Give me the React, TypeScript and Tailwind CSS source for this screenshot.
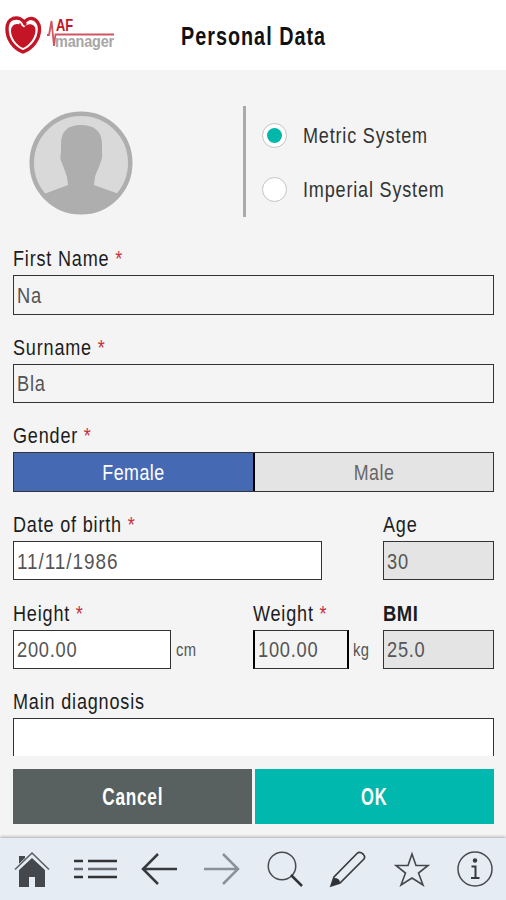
import { useState } from "react";
import type { ReactNode } from "react";
import clsx from "clsx";

const Label = ({ text, required, bold }: { text: string; required?: boolean; bold?: boolean }) => (
  <div
    className={clsx(
      "h-[30px] w-max origin-left whitespace-nowrap text-[22px] leading-[27px] text-[#1c1c1c]",
      bold ? "scale-x-[0.84] font-bold tracking-[0.6px]" : "scale-x-[0.82] tracking-[1px]"
    )}
  >
    {text}
    {required && <span className="ml-[7px] text-[#c8313f]">*</span>}
  </div>
);

const Field = ({
  label,
  value,
  required,
  bold,
  className,
  inputClassName,
}: {
  label: string;
  value: string;
  required?: boolean;
  bold?: boolean;
  className?: string;
  inputClassName?: string;
}) => (
  <div className={className}>
    <Label text={label} required={required} bold={bold} />
    <div className={clsx("h-[39.5px] border border-[#333] pl-[3px]", inputClassName)}>
      <input
        aria-label={label}
        defaultValue={value}
        className={clsx(
          "block h-full w-[116%] origin-left bg-transparent pt-[2px] text-[22px] text-[#555] outline-none",
          value.includes("/") ? "scale-x-[0.86] tracking-[1.1px]" : "scale-x-[0.83] tracking-[0.9px]"
        )}
      />
    </div>
  </div>
);

const Radio = ({ label, checked, onChange }: { label: string; checked: boolean; onChange: () => void }) => (
  <button onClick={onChange} className="flex items-center gap-4">
    <span className="flex size-[25px] items-center justify-center rounded-full border border-[#c4c4c4] bg-white">
      {checked && <span className="size-[15px] rounded-full bg-[#00b8a9]" />}
    </span>
    <span className="origin-left scale-x-[0.82] text-[22px] leading-[27px] tracking-[1px] text-[#333]">{label}</span>
  </button>
);

const Row = ({ children }: { children: ReactNode }) => <div className="flex h-[88.65px] shrink-0">{children}</div>;

const Logo = () => (
  <div className="flex h-[70px] w-[120px] shrink-0 items-start pl-[4px] pt-[15px]">
    <svg width="39" height="41" viewBox="0 0 39 41" fill="none">
      <path
        d="M21 9C19 4 14 2 9 3.500C4.500 5 3 9 3 14C3 24 9 33 19 37C29 33 35.500 24 35.500 14C35.500 8 32 4 28 3.500C25 3 23.500 4 22 5.500"
        stroke="#c31525"
        strokeWidth="3.400"
        strokeLinecap="round"
      />
      <path
        d="M19 33C12 30 7 22 7 16C7 11 11 8 15 9.500L16 7.500L17.500 10.500L20 12.500C24 7 31.500 9 31.500 15C31.500 22 26 30 19 33Z"
        fill="#c31525"
      />
    </svg>
    <div className="relative ml-[4px] h-[41px] w-[70px]">
      <svg width="70" height="34" viewBox="0 0 70 34" fill="none" className="absolute left-0 top-0">
        <path d="M0 20H2L4.500 6L7 31L8.500 19.500H67" stroke="#cf5560" strokeWidth="1.800" />
      </svg>
      <span className="absolute left-[9px] top-[3px] origin-left scale-x-[0.76] text-[17px] font-bold leading-[15px] text-[#c31525]">
        AF
      </span>
      <span className="absolute left-[8px] top-[19px] origin-left scale-x-[0.85] text-[17px] font-bold leading-[15px] tracking-[-0.2px] text-[#a6a6a6]">
        manager
      </span>
    </div>
  </div>
);

const Avatar = () => (
  <svg width="104" height="104" viewBox="0 0 104 104">
    <defs>
      <clipPath id="avatar-clip">
        <circle cx="52" cy="52" r="50" />
      </clipPath>
    </defs>
    <circle cx="52" cy="52" r="49.500" fill="#d9d9d9" />
    <path
      clipPath="url(#avatar-clip)"
      fill="#aeaeae"
      d="M32 33C32 20 39 14 52 14C65 14 73 20 73 33V42C74 46 72 50 71 53C69 59 67 62 66 66L65 74L90 83L104 92V104H0V92L15 83L39 74L38 66C36 60 35 57 33 52C31 49 31 45 32 42Z"
    />
    <circle cx="52" cy="52" r="49.250" fill="none" stroke="#aeaeae" strokeWidth="4.500" />
  </svg>
);

const icons = [
  {
    label: "Home",
    path: (
      <>
        <path d="M5 18L18 6L31 18V35H21V25H15V35H5Z" fill="#44474b" />
        <path d="M5 4H11V9L5 14Z" fill="#44474b" />
        <path d="M1 18.500L18 2L35 18.500" stroke="#e6ecf4" strokeWidth="4" />
        <path d="M1 17.500L18 1L35 17.500" stroke="#5c5f63" strokeWidth="1.600" />
      </>
    ),
  },
  {
    label: "List",
    path: (
      <g stroke="#303236" strokeWidth="2.500">
        <path d="M-3 9H6M11 9H40M-3 25H6M11 25H40" />
        <path d="M-3 17H6M11 17H40" stroke="#686c72" />
      </g>
    ),
  },
  { label: "Back", path: <path d="M36 17H2M17 2L2 17L17 32" stroke="#36393d" strokeWidth="2.500" /> },
  { label: "Forward", path: <path d="M0 17H34M19 2L34 17L19 32" stroke="#8b919b" strokeWidth="2.500" /> },
  {
    label: "Search",
    path: (
      <>
        <circle cx="15" cy="14" r="13.750" stroke="#484c51" strokeWidth="1.500" />
        <path d="M24 23L35 34" stroke="#303236" strokeWidth="2.500" />
      </>
    ),
  },
  {
    label: "Edit",
    path: (
      <>
        <path d="M1 34L4 25L27 1.500Q29.500 -1 33 2Q36 5 33.500 7.500L10 31Z" stroke="#393c40" strokeWidth="1.700" />
        <path d="M1 34L4 26Q10 26 10 31Z" fill="#303236" />
      </>
    ),
  },
  {
    label: "Favourites",
    path: (
      <path
        d="M18 2L22 13.500H34L24.500 21L29 33L18 26L7 33L11.500 21L2 13.500H14Z"
        stroke="#44484d"
        strokeWidth="1.600"
      />
    ),
  },
  {
    label: "Info",
    path: (
      <>
        <circle cx="18" cy="17" r="17" stroke="#484c51" strokeWidth="1.500" />
        <circle cx="18" cy="8.500" r="2.200" fill="#36393d" />
        <path d="M14.500 14.500H18.500V26M14 26H22.500" stroke="#36393d" strokeWidth="2" />
      </>
    ),
  },
];

const App = () => {
  const [metric, setMetric] = useState(true);
  const [gender, setGender] = useState("Female");

  return (
    <div className="flex h-[900px] w-[506px] flex-col overflow-hidden bg-[#f4f4f4] font-['Liberation_Sans',sans-serif]">
      <header className="flex h-[70px] shrink-0 bg-white">
        <Logo />
        <h1 className="ml-[61px] mt-[21px] origin-left scale-x-[0.79] whitespace-nowrap text-[25px] font-bold leading-[30px] tracking-[1.3px] text-[#111]">
          Personal Data
        </h1>
      </header>

      <main className="flex h-[686px] shrink-0 flex-col overflow-hidden pl-[13px] pr-[12px]">
        <div className="flex h-[175px] shrink-0">
          <div className="w-[230px] pl-4 pt-[41px]">
            <Avatar />
          </div>
          <div className="mt-[36px] flex h-[111px] flex-col gap-[27px] border-l-[3px] border-[#aaa] pl-4 pt-[16px]">
            <Radio label="Metric System" checked={metric} onChange={() => setMetric(true)} />
            <Radio label="Imperial System" checked={!metric} onChange={() => setMetric(false)} />
          </div>
        </div>

        <Row>
          <Field label="First Name" value="Na" required className="w-full" />
        </Row>
        <Row>
          <Field label="Surname" value="Bla" required className="w-full" />
        </Row>
        <Row>
          <div className="w-full">
            <Label text="Gender" required />
            <div className="flex h-[39.5px] border border-[#333]">
              {["Female", "Male"].map((option, i) => (
                <button
                  key={option}
                  onClick={() => setGender(option)}
                  className={clsx(
                    "text-[22px] tracking-[0.6px]",
                    i === 0 ? "w-[241px] border-r-2 border-black" : "flex-1",
                    gender === option ? "bg-[#456ab3] text-white" : "bg-[#e4e4e4] text-[#666]"
                  )}
                >
                  <span className="inline-block scale-x-[0.81]">{option}</span>
                </button>
              ))}
            </div>
          </div>
        </Row>
        <Row>
          <Field label="Date of birth" value="11/11/1986" required className="w-[309px]" inputClassName="bg-white" />
          <Field label="Age" value="30" className="ml-auto w-[111px]" inputClassName="bg-[#e4e4e4]" />
        </Row>
        <Row>
          <Field label="Height" value="200.00" required className="w-[158px]" inputClassName="bg-white" />
          <span className="ml-[5px] mt-[37px] w-[77px] origin-left scale-x-[0.82] text-[18px] tracking-[0.4px] text-[#555]">
            cm
          </span>
          <Field label="Weight" value="100.00" required className="w-[96px]" inputClassName="border-x-2 border-x-black" />
          <span className="ml-[4px] mt-[37px] origin-left scale-x-[0.82] text-[18px] tracking-[0.4px] text-[#555]">
            kg
          </span>
          <Field label="BMI" value="25.0" bold className="ml-auto w-[111px]" inputClassName="bg-[#e4e4e4]" />
        </Row>
        <Row>
          <Field label="Main diagnosis" value="" className="w-full" inputClassName="bg-white" />
        </Row>
      </main>

      <div className="flex h-[82px] shrink-0 gap-[3px] pl-[13px] pr-[12px] pt-[13px] text-[23px] font-bold tracking-[1px] text-white">
        <button className="h-[55px] w-[239px] bg-[#586060] pt-[2px]">
          <span className="inline-block scale-x-[0.75]">Cancel</span>
        </button>
        <button className="h-[55px] flex-1 bg-[#00b8ad] pt-[2px]">
          <span className="inline-block scale-x-[0.72]">OK</span>
        </button>
      </div>

      <nav className="flex flex-1 justify-between bg-[#e6ecf4] pl-[14px] pr-[13px] pt-[14px] shadow-[0_-1px_3px_rgba(0,0,0,0.3)]">
        {icons.map((icon) => (
          <button key={icon.label} aria-label={icon.label} className="h-[36px] w-[36px]">
            <svg width="36" height="36" viewBox="0 0 36 36" fill="none" className="overflow-visible">
              {icon.path}
            </svg>
          </button>
        ))}
      </nav>
    </div>
  );
};

export default App;
